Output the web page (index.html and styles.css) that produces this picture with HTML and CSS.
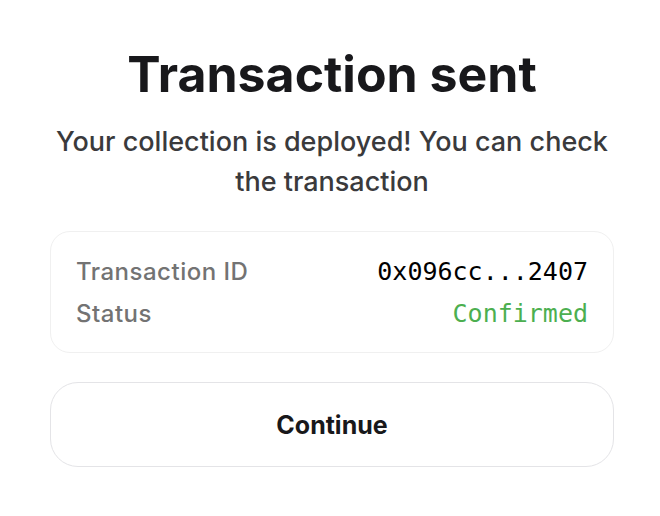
FILE: index.html
```html
<!DOCTYPE html>
<html>
<head>
<meta charset="utf-8">
<link rel="stylesheet" href="styles.css">
</head>
<body>
<main class="dialog">
  <h1 class="title">Transaction sent</h1>
  <p class="subtitle">Your collection is deployed! You can check the transaction</p>
  <section class="card">
    <div class="row">
      <span class="label">Transaction ID</span>
      <span class="value mono">0x096cc...2407</span>
    </div>
    <div class="row">
      <span class="label">Status</span>
      <span class="value mono ok">Confirmed</span>
    </div>
  </section>
  <button class="btn">Continue</button>
</main>
</body>
</html>
```
FILE: styles.css
```css
html, body {
  margin: 0;
  padding: 0;
  background: #ffffff;
}
body {
  font-family: Inter, "Noto Sans", sans-serif;
  color: #18181b;
}
.dialog {
  width: 564px;
  margin: 0 0 0 50px;
  padding-top: 42px;
  display: flex;
  flex-direction: column;
  align-items: stretch;
}
.title {
  margin: 0;
  font-size: 50px;
  font-weight: 700;
  line-height: 64px;
  text-align: center;
  color: #18181b;
}
.subtitle {
  margin: 16px 0 0;
  font-size: 27px;
  font-weight: 500;
  line-height: 40px;
  text-align: center;
  color: #3a3a3c;
  padding: 0 4px;
}
.card {
  margin-top: 29px;
  border: 1px solid #f0f0f0;
  border-radius: 20px;
  padding: 18px 25px;
  display: flex;
  flex-direction: column;
}
.row {
  display: flex;
  justify-content: space-between;
  align-items: center;
  height: 42px;
}
.label {
  font-size: 24px;
  font-weight: 500;
  letter-spacing: 0.5px;
  color: #737373;
}
.mono {
  font-family: "DejaVu Sans Mono", "Liberation Mono", monospace;
  font-size: 25px;
  color: #000000;
}
.ok {
  color: #4caf50;
}
.btn {
  margin-top: 29px;
  height: 85px;
  border: 1px solid #e4e4e7;
  border-radius: 28px;
  background: #ffffff;
  font-family: Inter, "Noto Sans", sans-serif;
  font-size: 25px;
  font-weight: 700;
  color: #18181b;
  cursor: pointer;
}
```
